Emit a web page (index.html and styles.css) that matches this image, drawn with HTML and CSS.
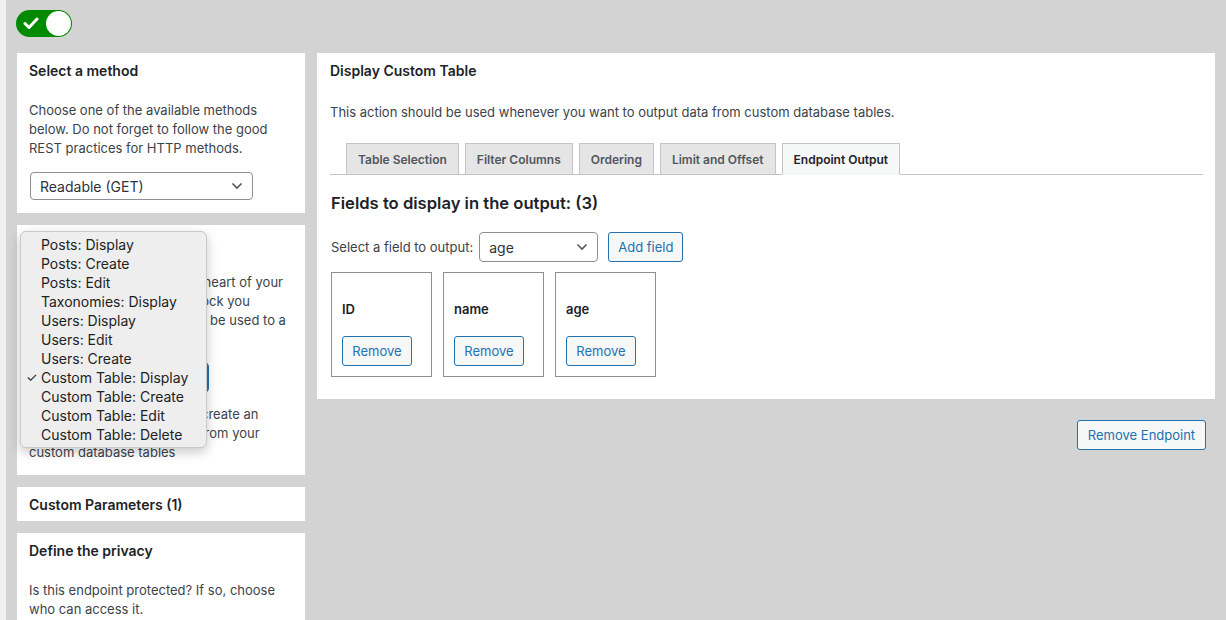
FILE: index.html
```html
<!DOCTYPE html>
<html lang="en">
<head>
<meta charset="utf-8">
<title>Endpoint editor</title>
<link rel="stylesheet" href="styles.css">
</head>
<body>
<div class="screen">
  <div class="toggle" role="switch" aria-checked="true">
    <svg class="toggle-check" width="16" height="13" viewBox="0 0 16 13"><path d="M2 6.5 L6 10.5 L14 2" fill="none" stroke="#fff" stroke-width="3" stroke-linecap="round" stroke-linejoin="round"/></svg>
    <span class="toggle-knob"></span>
  </div>

  <div class="layout">
    <aside class="sidebar">
      <section class="card">
        <h3 class="card-title">Select a method</h3>
        <p class="card-text">Choose one of the available methods below. Do not forget to follow the good REST practices for HTTP methods.</p>
        <div class="select select-method"><span>Readable (GET)</span></div>
      </section>

      <section class="card card-action">
        <ul class="menu">
          <li>Posts: Display</li>
          <li>Posts: Create</li>
          <li>Posts: Edit</li>
          <li>Taxonomies: Display</li>
          <li>Users: Display</li>
          <li>Users: Edit</li>
          <li>Users: Create</li>
          <li class="is-checked"><span class="menu-check">✓</span>Custom Table: Display</li>
          <li>Custom Table: Create</li>
          <li>Custom Table: Edit</li>
          <li>Custom Table: Delete</li>
        </ul>
        <h3 class="card-title">Select an action</h3>
        <p class="card-text">An action is the real beating heart of your endpoint. This is the logic block you selected for your endpoint to be used to a specific purpose.</p>
        <div class="select select-action is-focused"><span>Custom Table: Display</span></div>
        <p class="card-text card-text-after">This action will allow you to create an endpoint that reads all data from your custom database tables</p>
      </section>

      <section class="card card-compact">
        <h3 class="card-title">Custom Parameters (1)</h3>
      </section>

      <section class="card">
        <h3 class="card-title">Define the privacy</h3>
        <p class="card-text">Is this endpoint protected? If so, choose who can access it.</p>
      </section>
    </aside>

    <main class="main">
      <section class="panel">
        <h3 class="panel-title">Display Custom Table</h3>
        <p class="panel-text">This action should be used whenever you want to output data from custom database tables.</p>
        <div class="tabs">
          <span class="tab">Table Selection</span>
          <span class="tab">Filter Columns</span>
          <span class="tab">Ordering</span>
          <span class="tab">Limit and Offset</span>
          <span class="tab is-active">Endpoint Output</span>
        </div>
        <div class="output">
          <h2 class="output-title">Fields to display in the output: (3)</h2>
          <div class="field-picker">
            <label class="field-label">Select a field to output:</label>
            <div class="select select-field"><span>age</span></div>
            <button class="btn btn-add">Add field</button>
          </div>
          <div class="fields">
            <div class="field-box"><div class="field-name">ID</div><button class="btn btn-remove">Remove</button></div>
            <div class="field-box"><div class="field-name">name</div><button class="btn btn-remove">Remove</button></div>
            <div class="field-box"><div class="field-name">age</div><button class="btn btn-remove">Remove</button></div>
          </div>
        </div>
      </section>
      <div class="main-actions">
        <button class="btn btn-endpoint">Remove Endpoint</button>
      </div>
    </main>
  </div>
</div>
</body>
</html>
```

FILE: styles.css
```css
* { box-sizing: border-box; }

html, body {
  margin: 0;
  padding: 0;
}

body {
  background: #f0f0f1;
  font-family: Inter, "Liberation Sans", Arial, sans-serif;
  color: #3c434a;
  font-size: 13px;
  height: 620px;
  overflow: hidden;
}

.screen {
  margin-left: 6px;
  background: #d3d3d3;
  min-height: 620px;
  padding: 10px 11px 0 11px;
}

/* toggle */
.toggle {
  width: 56px;
  height: 27px;
  margin-left: -1px;
  border-radius: 14px;
  background: #008a00;
  display: flex;
  align-items: center;
  justify-content: space-between;
  padding: 1px 1px 1px 7px;
}
.toggle-check { display: block; }
.toggle-knob {
  width: 25px;
  height: 25px;
  border-radius: 50%;
  background: #fff;
}

.layout {
  display: grid;
  grid-template-columns: 288px 1fr;
  gap: 12px;
  margin-top: 16px;
  align-items: start;
}

.sidebar {
  display: flex;
  flex-direction: column;
  gap: 12px;
}

.card {
  position: relative;
  background: #fff;
  padding: 8px 12px 13px;
}
.card-compact { padding-bottom: 6px; }

.card-title {
  margin: 0;
  font-size: 14px;
  line-height: 20px;
  font-weight: 600;
  color: #1d2327;
}

.card-text {
  margin: 19.5px 0 14.5px;
  font-size: 13px;
  line-height: 19px;
  color: #3c434a;
}
.card-text:last-child { margin-bottom: 0; }
.card-text-after { margin-top: 13px; }

.select {
  height: 28px;
  border: 1px solid #8c8f94;
  border-radius: 4px;
  background: #fff url("data:image/svg+xml,%3Csvg xmlns='http://www.w3.org/2000/svg' width='12' height='8' viewBox='0 0 12 8'%3E%3Cpath d='M1.5 1.5 L6 6 L10.5 1.5' fill='none' stroke='%2350575e' stroke-width='1.6'/%3E%3C/svg%3E") no-repeat right 9px center;
  display: flex;
  align-items: center;
  padding: 0 26px 0 9px;
  font-size: 14px;
  color: #2c3338;
}
.select-method { width: 223px; margin-left: 1px; }
.select-action { width: 178px; height: 29px; margin-left: 1px; }
.select.is-focused {
  border-color: #2271b1;
  box-shadow: 0 0 0 1px #2271b1;
}

/* native-looking dropdown menu */
.menu {
  position: absolute;
  z-index: 2;
  left: 3px;
  top: 6px;
  width: 187px;
  margin: 0;
  padding: 3px 0;
  list-style: none;
  background: #eeeeee;
  border: 1px solid #c9c9c9;
  border-radius: 6px;
  box-shadow: 0 4px 12px rgba(0, 0, 0, 0.22);
  font-size: 14px;
  color: #222;
}
.menu li {
  position: relative;
  line-height: 19px;
  padding-left: 20px;
  white-space: nowrap;
}
.menu-check {
  position: absolute;
  left: 5px;
  top: 0;
  font-size: 13px;
}

/* main panel */
.panel {
  background: #fff;
  padding: 8px 12px 22px 13px;
}
.panel-title {
  margin: 0;
  font-size: 14px;
  line-height: 20px;
  font-weight: 600;
  color: #1d2327;
}
.panel-text {
  margin: 21.5px 0 21.5px;
  font-size: 13px;
  line-height: 19px;
  color: #3c434a;
}

.tabs {
  display: flex;
  gap: 6px;
  padding-left: 16px;
  border-bottom: 1px solid #c3c4c7;
}
.tab {
  height: 32px;
  margin-bottom: -1px;
  padding: 0 11px;
  display: flex;
  align-items: center;
  background: #e5e5e5;
  border: 1px solid #c3c4c7;
  font-size: 12px;
  font-weight: 600;
  color: #50575e;
}
.tab.is-active {
  background: #f6f7f7;
  border-bottom-color: #f6f7f7;
  color: #1d2327;
}

.output { padding-left: 1px; }
.output-title {
  margin: 17px 0 18px;
  font-size: 16.6px;
  line-height: 22px;
  font-weight: 600;
  color: #1d2327;
}

.field-picker {
  display: flex;
  align-items: center;
}
.field-label {
  font-size: 13px;
  color: #3c434a;
  margin-right: 6px;
}
.select-field {
  width: 119px;
  height: 30px;
  margin-right: 10px;
}

.btn {
  height: 30px;
  padding: 0 10px;
  border: 1px solid #2271b1;
  border-radius: 3px;
  background: #f6f7f7;
  color: #2271b1;
  font-family: inherit;
  font-size: 13px;
  line-height: 28px;
}
.btn-add { padding: 0 9px; }
.btn-remove { width: 70px; padding: 0; }

.fields {
  display: flex;
  gap: 11px;
  margin-top: 10px;
}
.field-box {
  width: 101px;
  height: 105px;
  border: 1px solid #8c8f94;
  padding: 27px 10px 10px;
}
.field-name {
  font-size: 13px;
  line-height: 18px;
  font-weight: 600;
  color: #1d2327;
  margin-bottom: 18px;
}

.main-actions {
  display: flex;
  justify-content: flex-end;
  padding-right: 9px;
  margin-top: 21px;
}
.btn-endpoint { width: 129px; padding: 0; }
```
